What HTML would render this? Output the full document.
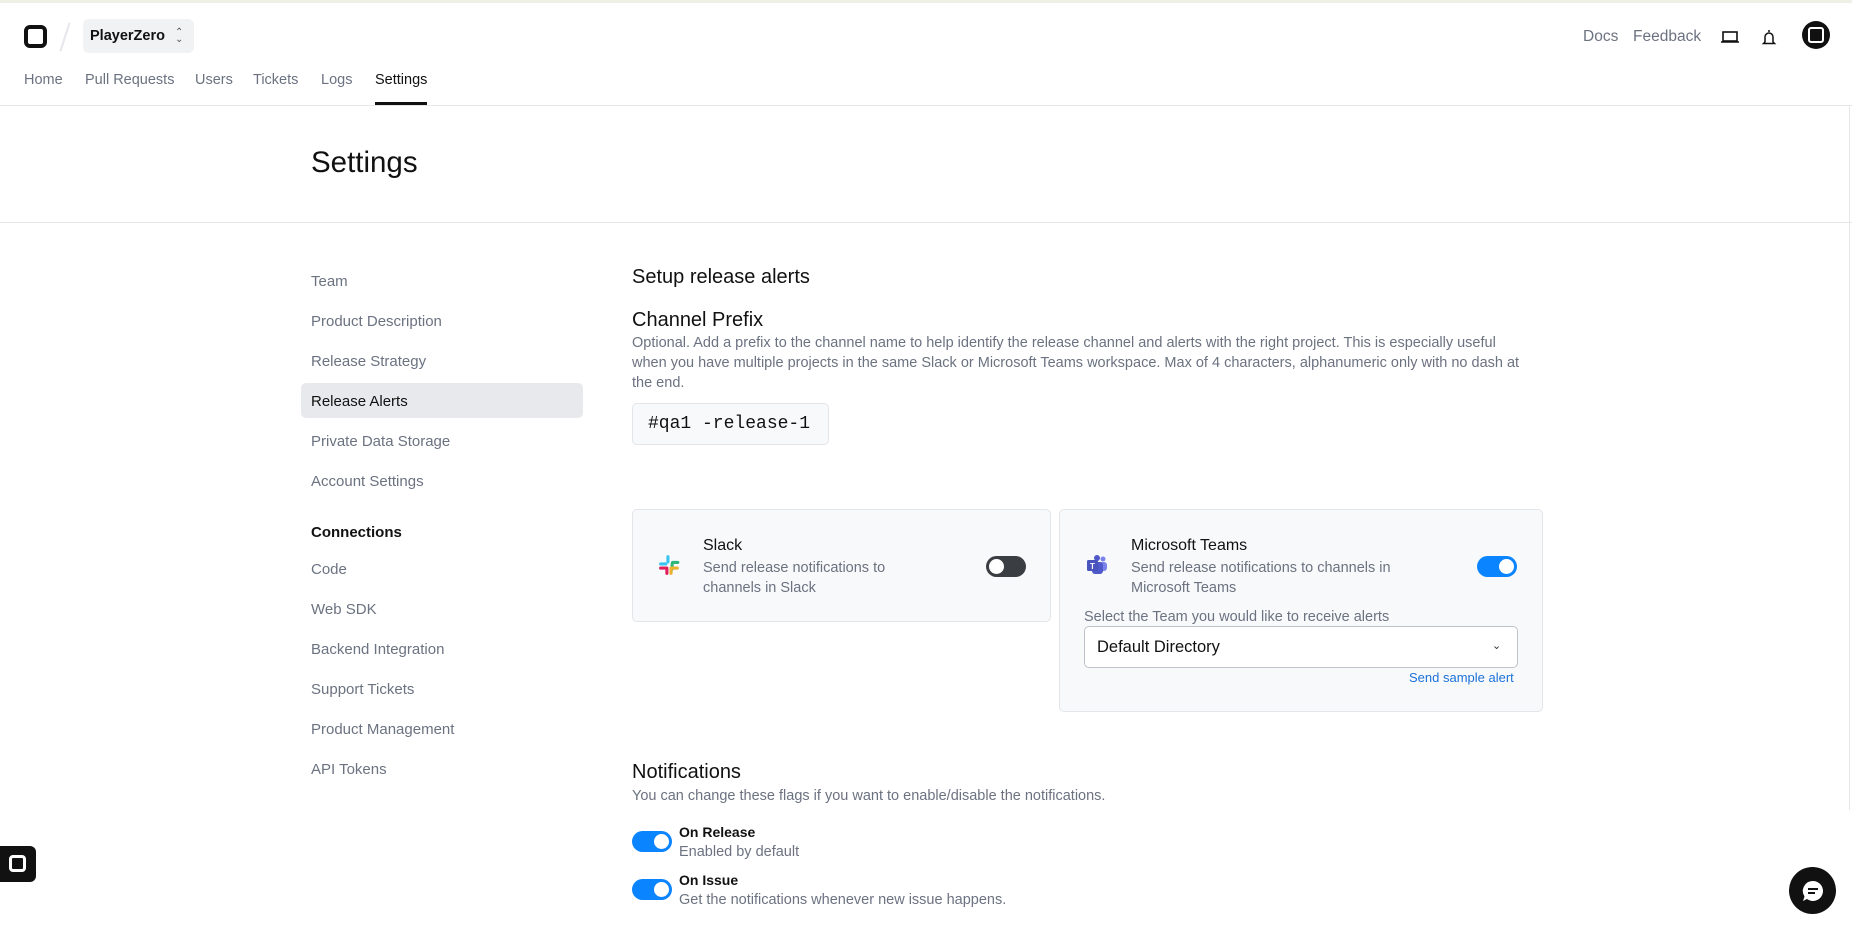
<!DOCTYPE html>
<html><head><meta charset="utf-8"><style>
*{box-sizing:border-box;margin:0;padding:0}
body{width:1852px;height:930px;overflow:hidden;background:#fff;font-family:"Liberation Sans",sans-serif;color:#111;position:relative}
.a{position:absolute;white-space:nowrap}
.nav{font-size:14.5px;color:#6b7280;top:72px}
.side{font-size:15px;color:#6b7280;left:311px}
.desc{color:#6b7280;font-size:14.5px;line-height:20px}
.card{position:absolute;background:#f8f9fb;border:1px solid #e3e5e8;border-radius:5px}
.tog{position:absolute;width:40px;height:21px;border-radius:11px;background:#0a84ff}
.tog::after{content:"";position:absolute;right:3px;top:3px;width:15px;height:15px;border-radius:50%;background:#fff}
</style></head><body>
<div class="a" style="left:0;top:0;width:1852px;height:3px;background:#eef0e6"></div>
<div class="a" style="left:24px;top:25px;width:23px;height:23px;border:4.5px solid #111;border-radius:6px"></div>
<div class="a" style="left:64px;top:22px;width:2px;height:30px;background:#e5e7eb;transform:rotate(18deg)"></div>
<div class="a" style="left:83px;top:19px;width:111px;height:34px;background:#f1f2f4;border-radius:6px"></div>
<div class="a" style="left:90px;top:28px;font-size:14.5px;font-weight:bold">PlayerZero</div>
<div class="a" style="left:175px;top:29px;font-size:10px;color:#555;line-height:7px">&#8963;<br>&#8964;</div>
<div class="a nav" style="left:24px">Home</div>
<div class="a nav" style="left:85px">Pull Requests</div>
<div class="a nav" style="left:195px">Users</div>
<div class="a nav" style="left:253px">Tickets</div>
<div class="a nav" style="left:321px">Logs</div>
<div class="a nav" style="left:375px;color:#111">Settings</div>
<div class="a" style="left:375px;top:102px;width:52px;height:3px;background:#111"></div>
<div class="a" style="left:0;top:105px;width:1852px;height:1px;background:#e5e7eb"></div>
<div class="a" style="left:1583px;top:28px;font-size:15.5px;color:#6b7280">Docs</div>
<div class="a" style="left:1633px;top:28px;font-size:15.5px;color:#6b7280">Feedback</div>
<svg class="a" style="left:1720px;top:28px" width="20" height="18" viewBox="0 0 20 18"><rect x="3" y="4" width="14" height="9" fill="none" stroke="#111" stroke-width="1.6"/><line x1="1" y1="14" x2="19" y2="14" stroke="#111" stroke-width="1.6"/></svg>
<svg class="a" style="left:1761px;top:28px" width="16" height="18" viewBox="0 0 16 18"><path d="M8 2v2M4 14V9a4 4 0 0 1 8 0v5l1.5 1.5h-11z" fill="none" stroke="#111" stroke-width="1.5"/></svg>
<div class="a" style="left:1802px;top:21px;width:28px;height:28px;border-radius:50%;background:#111"></div>
<div class="a" style="left:1808px;top:27px;width:16px;height:16px;border:2px solid #fff;border-radius:3px;background:#111"></div>
<div class="a" style="left:1811px;top:30px;width:10px;height:10px;background:#111"></div>
<div class="a" style="left:311px;top:146px;font-size:29.5px">Settings</div>
<div class="a" style="left:0;top:222px;width:1852px;height:1px;background:#e5e7eb"></div>
<div class="a" style="left:1849px;top:106px;width:1px;height:704px;background:#e5e7eb"></div>
<div class="a side" style="top:273px">Team</div>
<div class="a side" style="top:313px">Product Description</div>
<div class="a side" style="top:353px">Release Strategy</div>
<div class="a" style="left:301px;top:383px;width:282px;height:35px;background:#e8e9ec;border-radius:5px"></div>
<div class="a side" style="top:393px;color:#111">Release Alerts</div>
<div class="a side" style="top:433px">Private Data Storage</div>
<div class="a side" style="top:473px">Account Settings</div>
<div class="a side" style="top:524px;color:#111;font-weight:bold">Connections</div>
<div class="a side" style="top:561px">Code</div>
<div class="a side" style="top:601px">Web SDK</div>
<div class="a side" style="top:641px">Backend Integration</div>
<div class="a side" style="top:681px">Support Tickets</div>
<div class="a side" style="top:721px">Product Management</div>
<div class="a side" style="top:761px">API Tokens</div>
<div class="a" style="left:632px;top:266px;font-size:20px">Setup release alerts</div>
<div class="a" style="left:632px;top:309px;font-size:20px">Channel Prefix</div>
<div class="a desc" style="left:632px;top:333px;white-space:normal;width:900px">Optional. Add a prefix to the channel name to help identify the release channel and alerts with the right project. This is especially useful when you have multiple projects in the same Slack or Microsoft Teams workspace. Max of 4 characters, alphanumeric only with no dash at the end.</div>
<div class="a" style="left:632px;top:403px;width:197px;height:42px;background:#f8f9fb;border:1px solid #e3e5e8;border-radius:5px"></div>
<div class="a" style="left:648px;top:414px;font-family:'Liberation Mono',monospace;font-size:18px">#qa1 -release-1</div>
<div class="card" style="left:632px;top:509px;width:419px;height:113px"></div>
<svg class="a" style="left:657px;top:553px" width="25" height="25" viewBox="0 0 24 24"><rect x="9" y="2" width="3" height="8" rx="1.5" fill="#36c5f0"/><rect x="2" y="9" width="8" height="3" rx="1.5" fill="#36c5f0"/><rect x="13" y="2" width="3" height="8" rx="1.5" fill="#2eb67d" transform="rotate(90 14.5 9)"/><rect x="13" y="9" width="3" height="8" rx="1.5" fill="#2eb67d"/><rect x="12" y="13" width="3" height="8" rx="1.5" fill="#ecb22e"/><rect x="13" y="13" width="8" height="3" rx="1.5" fill="#ecb22e"/><rect x="8" y="13" width="3" height="8" rx="1.5" fill="#e01e5a"/><rect x="2" y="13" width="8" height="3" rx="1.5" fill="#e01e5a"/></svg>
<div class="a" style="left:703px;top:537px;font-size:16px">Slack</div>
<div class="a desc" style="left:703px;top:558px">Send release notifications to<br>channels in Slack</div>
<div class="a" style="left:986px;top:556px;width:40px;height:21px;border-radius:11px;background:#3a3d42"></div>
<div class="a" style="left:988px;top:558px;width:17px;height:17px;border-radius:50%;background:#fff;border:1px solid #3a3d42"></div>
<div class="card" style="left:1059px;top:509px;width:484px;height:203px"></div>
<svg class="a" style="left:1085px;top:553px" width="24" height="24" viewBox="0 0 24 24"><circle cx="18" cy="6" r="2.5" fill="#7b83eb"/><rect x="14" y="9" width="8" height="9" rx="3" fill="#7b83eb"/><circle cx="12" cy="5" r="3" fill="#5059c9"/><rect x="7" y="9" width="11" height="12" rx="3" fill="#5059c9"/><rect x="2" y="7" width="11" height="11" rx="1.5" fill="#4b53bc"/><text x="7.5" y="16" font-size="8" fill="#fff" text-anchor="middle" font-family="Liberation Sans" font-weight="bold">T</text></svg>
<div class="a" style="left:1131px;top:537px;font-size:16px">Microsoft Teams</div>
<div class="a desc" style="left:1131px;top:558px">Send release notifications to channels in<br>Microsoft Teams</div>
<div class="tog" style="left:1477px;top:556px"></div>
<div class="a desc" style="left:1084px;top:607px">Select the Team you would like to receive alerts</div>
<div class="a" style="left:1084px;top:626px;width:434px;height:42px;background:#fff;border:1px solid #bfc3c9;border-radius:5px"></div>
<div class="a" style="left:1097px;top:638px;font-size:16.5px">Default Directory</div>
<div class="a" style="left:1492px;top:639px;font-size:11px;color:#333">&#8964;</div>
<div class="a" style="left:1409px;top:670px;font-size:13px;color:#1a73d9">Send sample alert</div>
<div class="a" style="left:632px;top:761px;font-size:20px">Notifications</div>
<div class="a desc" style="left:632px;top:786px">You can change these flags if you want to enable/disable the notifications.</div>
<div class="tog" style="left:632px;top:831px"></div>
<div class="a" style="left:679px;top:824px;font-size:14px;font-weight:bold">On Release</div>
<div class="a desc" style="left:679px;top:842px">Enabled by default</div>
<div class="tog" style="left:632px;top:879px"></div>
<div class="a" style="left:679px;top:872px;font-size:14px;font-weight:bold">On Issue</div>
<div class="a desc" style="left:679px;top:890px">Get the notifications whenever new issue happens.</div>
<div class="a" style="left:0;top:846px;width:36px;height:36px;background:#111;border-radius:0 6px 6px 0"></div>
<div class="a" style="left:9px;top:855px;width:17px;height:17px;border:3px solid #fff;border-radius:4px"></div>
<div class="a" style="left:1789px;top:867px;width:47px;height:47px;border-radius:50%;background:#111"></div>
<svg class="a" style="left:1800px;top:878px" width="26" height="26" viewBox="0 0 26 26"><path d="M13 3a10 10 0 1 1-6 18l-4 2 1.5-4.5A10 10 0 0 1 13 3z" fill="#fff"/><rect x="8" y="10" width="10" height="2" fill="#111"/><rect x="8" y="14" width="7" height="2" fill="#111"/></svg>
</body></html>
